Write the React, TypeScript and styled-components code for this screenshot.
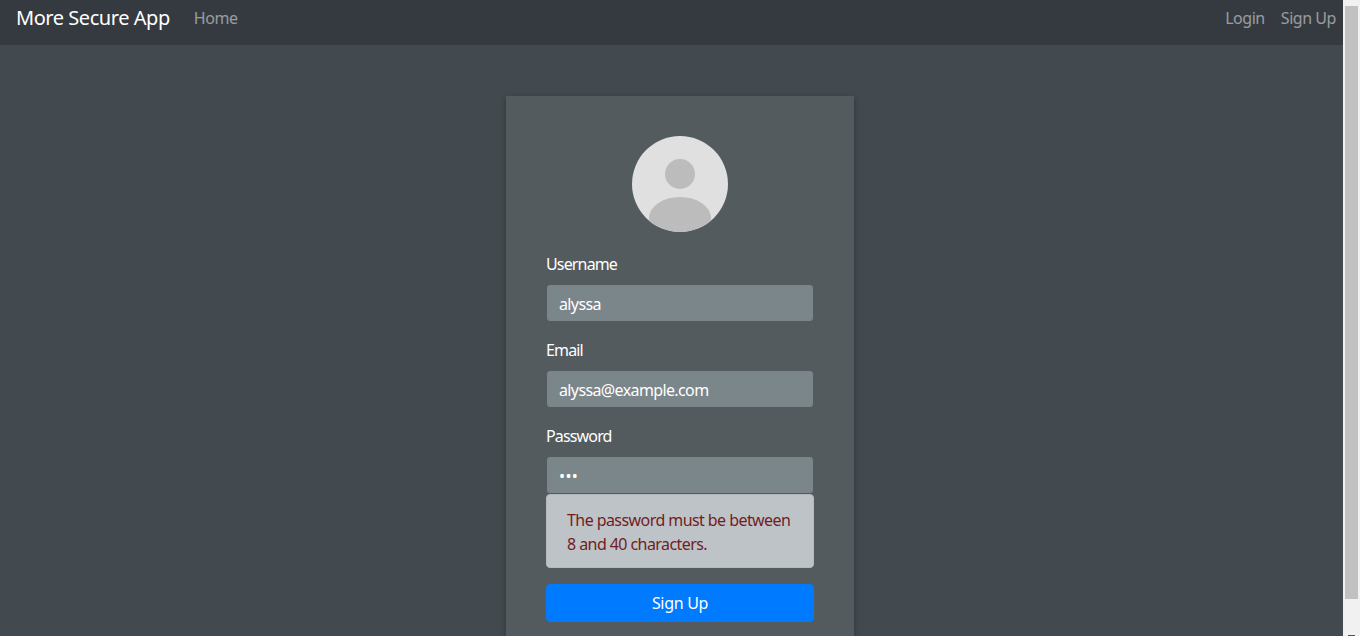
import React from "react";
import styled, { createGlobalStyle } from "styled-components";

const GlobalStyle = createGlobalStyle`
  html, body {
    margin: 0;
    height: 100%;
  }
  body {
    font-family: "Noto Sans", "Open Sans", "Liberation Sans", sans-serif;
    font-size: 16px;
    line-height: 24px;
    overflow: hidden;
    background: #f1f1f1;
  }
  * {
    box-sizing: border-box;
  }
`;

const Shell = styled.div`
  display: flex;
  height: 636px;
  overflow: hidden;
`;

const Page = styled.div`
  flex: 1;
  min-width: 0;
  background: #434a4f;
  overflow: hidden;
`;

const Navbar = styled.nav`
  display: flex;
  align-items: center;
  height: 45px;
  padding: 0 0 9px 16px;
  background: #353a41;
`;

const Brand = styled.a`
  margin-right: 16px;
  font-size: 20px;
  line-height: 30px;
  color: #fff;
  letter-spacing: -0.45px;
`;

const NavList = styled.div<{ $right?: boolean }>`
  display: flex;
  margin-left: ${(p) => (p.$right ? "auto" : "0")};
  margin-right: ${(p) => (p.$right ? "-1px" : "0")};
`;

const NavLink = styled.a`
  padding: 0 8px;
  color: rgba(255, 255, 255, 0.5);
  letter-spacing: -0.45px;
`;

const Content = styled.main`
  display: flex;
  justify-content: center;
  padding: 51px 0 0 17px;
`;

const Card = styled.div`
  width: 348px;
  padding: 40px;
  background: #545b5f;
  box-shadow: 0 2px 6px rgba(0, 0, 0, 0.3);
`;

const Avatar = styled.svg`
  display: block;
  width: 96px;
  height: 96px;
  margin: 0 auto 20px;
`;

const Group = styled.div`
  margin-bottom: 16px;
`;

const Label = styled.label`
  display: block;
  margin-bottom: 8px;
  color: #fff;
  letter-spacing: -0.85px;
`;

const Input = styled.input`
  display: block;
  width: 100%;
  height: 38px;
  padding: 7px 12px 5px;
  font: inherit;
  letter-spacing: ${(p) => (p.type === "password" ? "0.4px" : "-0.62px")};
  color: #fff;
  background: #7b868a;
  border: 1px solid #545b5f;
  border-radius: 4px;
  outline: none;
`;

const Alert = styled.div`
  padding: 13px 20px 11px;
  color: #721c24;
  background: #bec3c7;
  border: 1px solid #b4b9be;
  border-radius: 4px;
  letter-spacing: -0.57px;
`;

const SubmitButton = styled.button`
  display: block;
  width: 100%;
  height: 38px;
  padding: 6px 12px;
  font: inherit;
  letter-spacing: -0.3px;
  color: #fff;
  background: #007bff;
  border: 1px solid #007bff;
  border-radius: 4px;
`;

const Scrollbar = styled.div`
  display: flex;
  flex-direction: column;
  flex: none;
  width: 17px;
  padding: 6px 2px 0;
  background: #f1f1f1;
`;

const Thumb = styled.div`
  height: 593px;
  background: #c1c1c1;
`;

const ArrowDown = styled.div`
  align-self: center;
  width: 7px;
  height: 1px;
  margin-top: auto;
  background: #505050;
`;

export default function App() {
  return (
    <>
      <GlobalStyle />
      <Shell>
        <Page>
          <Navbar>
            <Brand>More Secure App</Brand>
            <NavList>
              <NavLink>Home</NavLink>
            </NavList>
            <NavList $right>
              <NavLink>Login</NavLink>
              <NavLink>Sign Up</NavLink>
            </NavList>
          </Navbar>
          <Content>
            <Card>
              <Avatar viewBox="0 0 96 96">
                <defs>
                  <clipPath id="avatar-clip">
                    <circle cx="48" cy="48" r="48" />
                  </clipPath>
                </defs>
                <circle cx="48" cy="48" r="48" fill="#e0e0e0" />
                <circle cx="48" cy="38" r="15" fill="#bcbcbc" />
                <path d="M17 82a31 21 0 0 1 62 0v14H17z" fill="#bcbcbc" clipPath="url(#avatar-clip)" />
              </Avatar>
              <Group>
                <Label>Username</Label>
                <Input type="text" defaultValue="alyssa" />
              </Group>
              <Group>
                <Label>Email</Label>
                <Input type="text" defaultValue="alyssa@example.com" />
              </Group>
              <Group>
                <Label>Password</Label>
                <Input type="password" defaultValue="abc" />
                <Alert>The password must be between 8 and 40 characters.</Alert>
              </Group>
              <SubmitButton>Sign Up</SubmitButton>
            </Card>
          </Content>
        </Page>
        <Scrollbar>
          <Thumb />
          <ArrowDown />
        </Scrollbar>
      </Shell>
    </>
  );
}
